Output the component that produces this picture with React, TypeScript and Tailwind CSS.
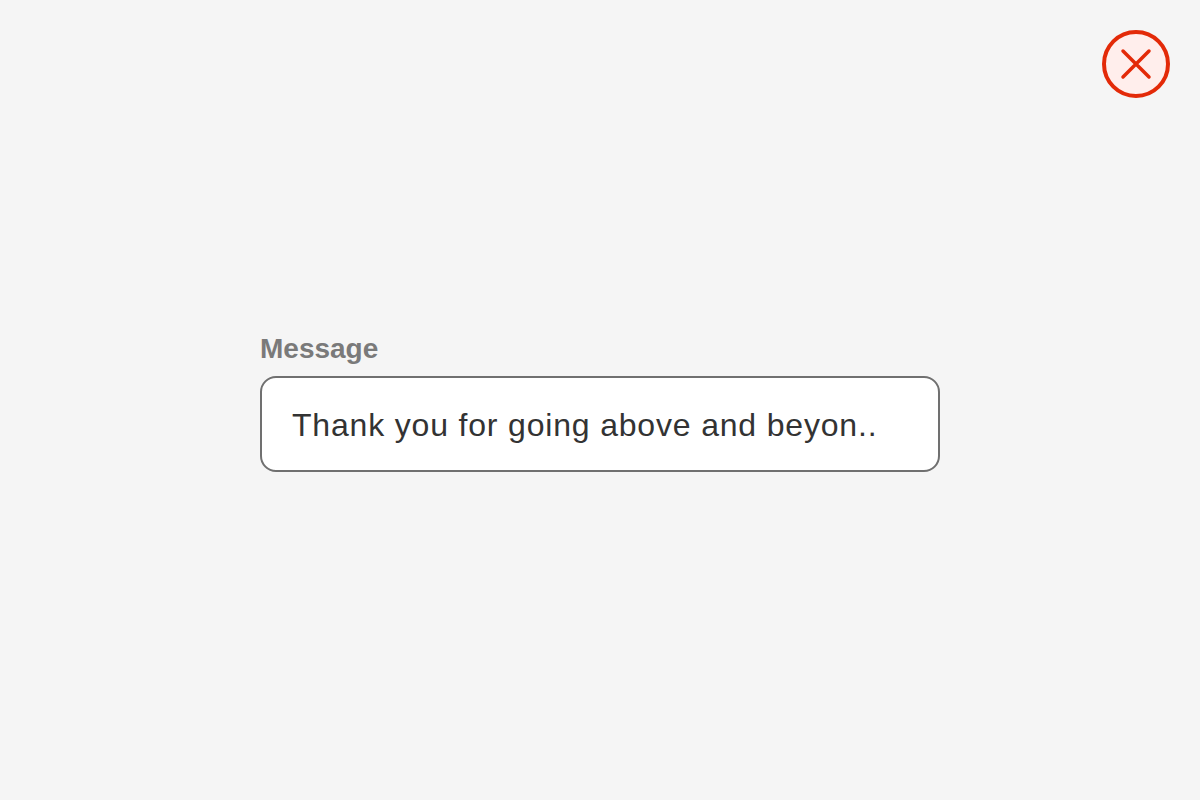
export default function App() {
  return (
    <div className="h-[800px] w-[1200px] bg-[#f5f5f5] font-['Liberation_Sans',Arial,sans-serif]">
      <div className="flex justify-end pt-[30px] pr-[30px]">
        <button className="h-[68px] w-[68px]">
          <svg width="68" height="68" viewBox="0 0 68 68" fill="none">
            <circle cx="34" cy="34" r="32" fill="#ffeeec" stroke="#e32a08" strokeWidth="4" />
            <path d="M21 21L47 47M47 21L21 47" stroke="#e32a08" strokeWidth="3.5" strokeLinecap="round" />
          </svg>
        </button>
      </div>
      <div className="mx-auto mt-[233px] w-[680px]">
        <label className="block h-[45px] text-[28px] leading-[36px] font-bold text-[#7a7a7a]">Message</label>
        <div className="flex h-[96px] items-center rounded-[16px] border-2 border-[#707070] bg-white px-[30px]">
          <span className="pt-[2px] text-[32px] tracking-[0.82px] text-[#333333]">Thank you for going above and beyon..</span>
        </div>
      </div>
    </div>
  );
}
